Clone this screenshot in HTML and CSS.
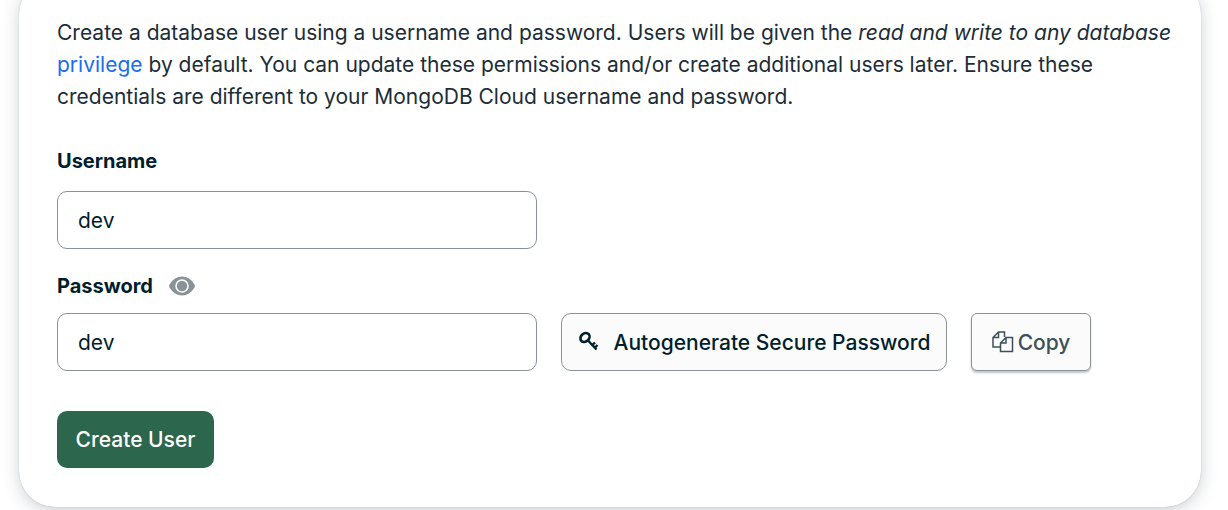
FILE: index.html
```
<!DOCTYPE html>
<html lang="en">
<head>
  <meta charset="UTF-8">
  <meta name="viewport" content="width=device-width, initial-scale=1.0">
  <title>Create a database user</title>
  <link rel="stylesheet" href="styles.css">
</head>
<body>
  <form class="card">
    <p class="intro">
      Create a database user using a username and password. Users will be given the <em>read and write to any database</em>
      <a href="#">privilege</a> by default. You can update these permissions and/or create additional users later. Ensure these
      credentials are different to your MongoDB Cloud username and password.
    </p>

    <div class="label-row">
      <label for="username">Username</label>
    </div>
    <input class="field" type="text" id="username" value="dev">

    <div class="label-row password-label">
      <label for="password">Password</label>
      <button class="toggle" type="button" aria-label="Hide password">
        <svg width="26" height="20" viewBox="0 0 26 20">
          <path d="M13 0.5C8 0.5 3.6 3.2 0.5 8.5Q-0.2 10 0.5 11.5C3.6 16.8 8 19.5 13 19.5S22.4 16.8 25.5 11.5Q26.2 10 25.5 8.5C22.4 3.2 18 0.5 13 0.5Z" fill="#889397"/>
          <circle cx="13" cy="10" r="6" fill="#889397" stroke="#fff" stroke-width="1.5"/>
        </svg>
      </button>
    </div>
    <div class="password-row">
      <input class="field" type="text" id="password" value="dev">
      <button class="btn generate" type="button">
        <svg width="22" height="22" viewBox="0 0 22 22" fill="none" stroke="#001e2b">
          <ellipse cx="7" cy="6.5" rx="5" ry="4" transform="rotate(-42 7 6.5)" stroke-width="2.6"/>
          <path d="M10 9.5L18.5 18.5M14.5 14L17 11.5M17 16.5L19.5 14" stroke-width="2.4"/>
        </svg>
        Autogenerate Secure Password
      </button>
      <button class="btn copy" type="button">
        <svg width="22" height="22" viewBox="0 0 22 22" fill="none" stroke="#3d4f58" stroke-width="1.5">
          <path d="M8.5 16H1V6.5L6.5 1H12.5V6M6.5 1V6.5H1"/>
          <path d="M14 6.5H20.5V20.5H8.5V12L14 6.5ZM14 6.5V12H8.5"/>
        </svg>
        Copy
      </button>
    </div>

    <button class="btn create" type="submit">Create User</button>
  </form>
</body>
</html>
```
FILE: styles.css
```
body {
  display: flow-root;
  min-height: 100vh;
  margin: 0;
  background-color: #fff;
  color: #1c2d38;
  font-family: Inter, "Open Sans", sans-serif;
  font-size: 21px;
  line-height: 32px;
  overflow: hidden;
}
.card {
  margin: -22px 27px 0 19px;
  padding: 39px 26px 39px 38px;
  border-radius: 36px;
  background-color: #fff;
  box-shadow: 0 4px 20px -4px rgba(0, 30, 43, 0.3), 0 0 1px rgba(0, 30, 43, 0.3);
}
.intro {
  margin: 0 0 32px;
}
.intro a {
  color: #1a6cf0;
  text-decoration: none;
}
.label-row {
  display: flex;
  align-items: center;
  gap: 16px;
  margin-bottom: 14px;
  color: #001e2b;
  font-size: 20px;
  font-weight: bold;
}
.password-label {
  margin: 21px 0 11px;
}
.toggle {
  display: flex;
  padding: 0;
  border: none;
  background: none;
  cursor: pointer;
}
.field {
  display: block;
  box-sizing: border-box;
  width: 480px;
  height: 58px;
  padding: 0 20px;
  border: 1px solid #889397;
  border-radius: 10px;
  background-color: #fff;
  color: #001e2b;
  font-family: inherit;
  font-size: 21px;
}
.password-row {
  display: flex;
  gap: 24px;
  margin-bottom: 40px;
}
.btn {
  display: flex;
  align-items: center;
  justify-content: center;
  height: 58px;
  padding: 0 14px;
  border: 1px solid #889397;
  border-radius: 10px;
  background-color: #fbfbfb;
  color: #001e2b;
  font-family: inherit;
  font-size: 21px;
  font-weight: 500;
  white-space: nowrap;
  cursor: pointer;
}
.generate {
  gap: 14px;
  width: 386px;
}
.copy {
  gap: 4px;
  width: 120px;
  border-radius: 6px;
  color: #3d4f58;
  box-shadow: 0 2px 2px rgba(0, 30, 43, 0.25);
}
.create {
  width: 157px;
  height: 57px;
  border: none;
  background-color: #2c664c;
  color: #fff;
}
```
